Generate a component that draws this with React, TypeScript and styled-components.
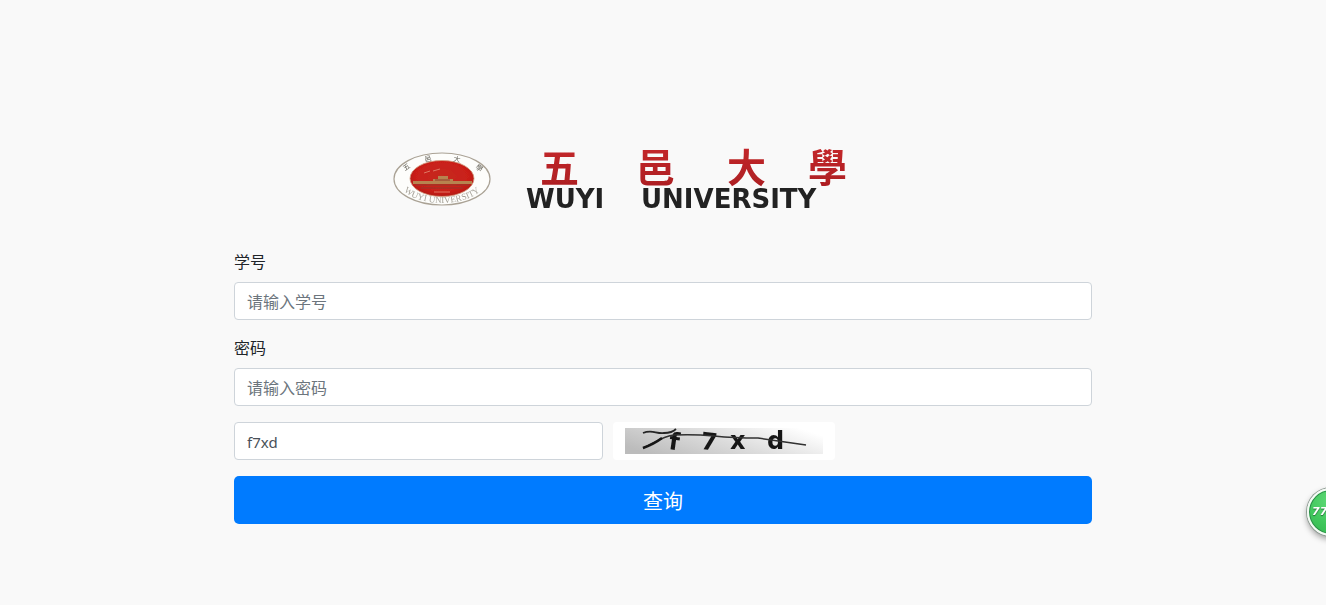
import React, { useState } from "react";
import styled, { createGlobalStyle } from "styled-components";

const GlobalStyle = createGlobalStyle`
  * { box-sizing: border-box; }
  body {
    margin: 0;
    background: #f9f9f9;
    color: #212529;
    font-family: "Noto Sans", "Noto Sans CJK SC", sans-serif;
    font-size: 16px;
    line-height: 24px;
    overflow-x: hidden;
  }
`;

const Page = styled.main`
  display: flex;
  flex-direction: column;
  align-items: center;
  padding: 140px 16px 80px;
`;

const Brand = styled.svg`
  display: block;
  width: 100%;
  max-width: 558px;
  height: auto;
  margin-bottom: 30px;
`;

const QueryForm = styled.form`
  display: flex;
  flex-direction: column;
  gap: 16px;
  width: 100%;
  max-width: 858px;
`;

const Field = styled.div`
  display: flex;
  flex-direction: column;
  gap: 8px;
`;

const Label = styled.label`
  line-height: 24px;
`;

const Input = styled.input`
  width: 100%;
  height: 38px;
  padding: 7px 12px 5px;
  border: 1px solid #ced4da;
  border-radius: 4px;
  background: #fff;
  color: #495057;
  font: inherit;

  &::placeholder {
    color: #6c757d;
    opacity: 1;
  }
`;

const CodeInput = styled(Input)`
  font-size: 15px;
`;

const CodeRow = styled.div`
  display: grid;
  grid-template-columns: 43% 222px;
  gap: 10px;
`;

const CodeButton = styled.button`
  height: 38px;
  padding: 6px 12px;
  border: 0;
  border-radius: 4px;
  background: #fff;
  cursor: pointer;
`;

const CodePicture = styled.svg`
  display: block;
  width: 100%;
  height: 26px;
`;

const Submit = styled.button`
  height: 48px;
  padding: 3px 16px 0;
  border: 0;
  border-radius: 5px;
  background: #007bff;
  color: #fff;
  font: inherit;
  font-size: 20px;
  cursor: pointer;
`;

const Meter = styled.button`
  position: fixed;
  top: 488px;
  right: -29px;
  width: 48px;
  height: 48px;
  padding: 0 0 0 3px;
  border: 2px solid #f4fbf5;
  border-radius: 50%;
  background: radial-gradient(circle at 50% 25%, #61da78, #3fc65b 60%, #35b551);
  box-shadow: inset 0 0 0 1px #2c8b48, 0 0 0 1px #8b9990, 0 3px 6px rgba(0, 0, 0, 0.4);
  color: #fff;
  font: italic 700 11px/44px "DejaVu Sans", sans-serif;
  text-align: left;
  text-shadow: 0 1px 1px #246c38;
`;

function Logo() {
  return (
    <Brand viewBox="384 140 558 80" role="img" aria-label="五邑大學 Wuyi University">
      <defs>
        <radialGradient id="seal" cx="50%" cy="45%" r="60%">
          <stop offset="0" stopColor="#c52a20" />
          <stop offset="0.7" stopColor="#ca1f19" />
          <stop offset="1" stopColor="#a91b19" />
        </radialGradient>
        <linearGradient id="ink" x1="0" y1="0" x2="0" y2="1">
          <stop offset="0" stopColor="#c92a2c" />
          <stop offset="1" stopColor="#a91d22" />
        </linearGradient>
        <path id="sealBottom" d="M397 178A45 25 0 0 0 487 178" />
        <filter id="soft" x="-5%" y="-10%" width="110%" height="120%">
          <feGaussianBlur stdDeviation="0.7" />
        </filter>
      </defs>
      <g filter="url(#soft)">
        <ellipse cx="442" cy="179" rx="48" ry="26" fill="#fdfdfb" stroke="#aaa295" strokeWidth="1.2" />
        <ellipse cx="442" cy="178.500" rx="32" ry="18" fill="url(#seal)" stroke="#d39e80" strokeWidth="0.8" />
        <path d="M413 181h20v-2h5v-3h10v3h5v2h19v3h-59z" fill="#b78350" />
        <path d="M416 185h53M421 188h42M435 180h15" stroke="#93392b" strokeWidth="1" />
        <path d="M424 173l6-2M433 171l7-2M434 192h16" stroke="#de7763" strokeWidth="1" />
        <text
          x="405 425 453 475"
          y="171 162 161 168"
          rotate="-35 -12 12 35"
          fontFamily="Noto Sans CJK TC, sans-serif"
          fontSize="7"
          fill="#67645b"
        >
          五邑大學
        </text>
        <text fontFamily="Liberation Serif, serif" fontSize="9" fill="#a7a39a">
          <textPath href="#sealBottom" startOffset="50%" textAnchor="middle">WUYI UNIVERSITY</textPath>
        </text>
        <text
          x="540 636 727 808"
          y="182"
          fontFamily="Noto Sans CJK TC, sans-serif"
          fontSize="39"
          fontWeight="700"
          fill="url(#ink)"
        >
          五邑大學
        </text>
        <g fontFamily="DejaVu Sans, sans-serif" fontSize="26" fontWeight="700" fill="#222">
          <text x="526" y="208">WUYI</text>
          <text x="641" y="208">UNIVERSITY</text>
        </g>
      </g>
    </Brand>
  );
}

function CodeImage() {
  return (
    <CodePicture viewBox="0 0 198 26" aria-hidden="true">
      <defs>
        <linearGradient id="codeShade" x1="0" y1="0.7" x2="1" y2="0.3">
          <stop offset="0" stopColor="#bcbcbc" />
          <stop offset="0.5" stopColor="#dcdcdc" />
          <stop offset="1" stopColor="#fff" />
        </linearGradient>
        <filter id="codeSoft" x="-5%" y="-20%" width="110%" height="140%">
          <feGaussianBlur stdDeviation="0.7" />
        </filter>
      </defs>
      <rect width="198" height="26" fill="url(#codeShade)" />
      <g filter="url(#codeSoft)">
        <text
          x="43 75 105 142"
          y="21"
          rotate="8 6 0 0"
          fontFamily="DejaVu Sans, sans-serif"
          fontSize="24"
          fontWeight="700"
          fill="#171717"
        >
          f7xd
        </text>
        <path d="M18 5C27 1 31 6 39 5Q47 5 51 1" fill="none" stroke="#262626" strokeWidth="1.8" />
        <path d="M18 20C31 14 38 8 49 7Q69 6 89 8T133 10L160 14 181 17" fill="none" stroke="#303030" strokeWidth="1.5" />
        <path d="M18 20Q29 16 37 10" fill="none" stroke="#181818" strokeWidth="2.6" />
      </g>
    </CodePicture>
  );
}

export default function App() {
  const [code, setCode] = useState("f7xd");

  return (
    <>
      <GlobalStyle />
      <Page>
        <Logo />
        <QueryForm onSubmit={(event: React.FormEvent) => event.preventDefault()}>
          <Field>
            <Label htmlFor="studentId">学号</Label>
            <Input id="studentId" type="text" placeholder="请输入学号" />
          </Field>
          <Field>
            <Label htmlFor="password">密码</Label>
            <Input id="password" type="password" placeholder="请输入密码" />
          </Field>
          <CodeRow>
            <CodeInput
              aria-label="验证码"
              value={code}
              onChange={(event: React.ChangeEvent<HTMLInputElement>) => setCode(event.target.value)}
            />
            <CodeButton type="button" aria-label="更换验证码">
              <CodeImage />
            </CodeButton>
          </CodeRow>
          <Submit type="submit">查询</Submit>
        </QueryForm>
      </Page>
      <Meter type="button">77</Meter>
    </>
  );
}
